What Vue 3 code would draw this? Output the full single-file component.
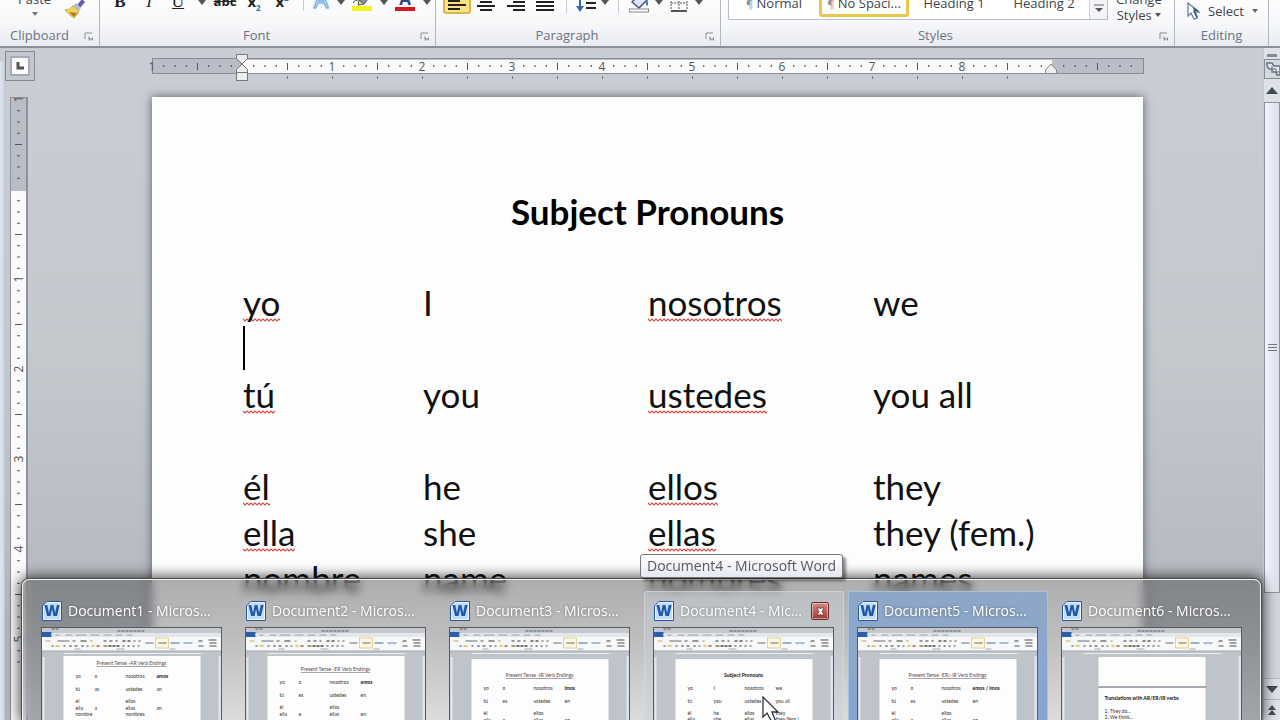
<script setup>
const INCH = 90

// Ruler marks: a number on each inch, a long tick on each half, dots on the eighths.
function marks(from, to) {
  const out = []
  for (let n = from; n <= to; n++) {
    const kind = n % 8 === 0 ? 'num' : n % 4 === 0 ? 'half' : 'dot'
    if (n !== 0) out.push({ n, kind, at: (n * INCH) / 8, label: Math.abs(n / 8) })
  }
  return out
}
const across = marks(-8, 79).filter(m => m.n !== 72)
const down = marks(-8, 42)
const tabStops = Array.from({ length: 17 }, (_, i) => (i + 1) * (INCH / 2))

const rows = [
  ['yo', 'I', 'nosotros', 'we'],
  ['', '', '', ''],
  ['tú', 'you', 'ustedes', 'you all'],
  ['', '', '', ''],
  ['él', 'he', 'ellos', 'they'],
  ['ella', 'she', 'ellas', 'they (fem.)'],
  ['nombre', 'name', 'nombres', 'names']
]

const verbRows = (a, b, c, d) => [
  [0, ['yo', 'o', 'nosotros', a]],
  [13, ['tú', b, 'ustedes', c]],
  [25, ['él', '', 'ellos', '']],
  [32, ['ella', d, 'ellas', c]],
  [38, ['nombre', '', 'nombres', '']]
]

const previews = [
  { name: 'Document1 - Micros...', top: 28, title: 'Present Tense -AR Verb Endings', ty: 37, ry: 50, cols: [34, 53, 84, 115], rows: verbRows('amos', 'as', 'an', 'a') },
  { name: 'Document2 - Micros...', top: 28, title: 'Present Tense -ER Verb Endings', ty: 43, ry: 56, cols: [34, 53, 84, 115], rows: verbRows('emos', 'es', 'en', 'e').slice(0, 4) },
  { name: 'Document3 - Micros...', top: 31, title: 'Present Tense -IR Verb Endings', ty: 49, ry: 62, cols: [34, 53, 84, 115], rows: verbRows('imos', 'es', 'en', 'e').slice(0, 4) },
  { name: 'Document4 - Mic...', top: 31, title: 'Subject Pronouns', plain: true, ty: 49, ry: 62, cols: [34, 60, 91, 122], hover: true,
    rows: [[0, ['yo', 'I', 'nosotros', 'we']], [13, ['tú', 'you', 'ustedes', 'you all']], [25, ['él', 'he', 'ellos', 'they']], [31, ['ella', 'she', 'ellas', 'they (fem.)']]] },
  { name: 'Document5 - Micros...', top: 31, title: 'Present Tense -ER/-IR Verb Endings', ty: 49, ry: 62, cols: [34, 53, 84, 115], active: true, rows: verbRows('emos / imos', 'es', 'en', 'e').slice(0, 4) },
  { name: 'Document6 - Micros...', split: true }
]

const miniIcons = [
  [4, 12, 5, '#d9c58f'], [10, 17, 2, '#777'], [14, 17, 4, '#e0b93a'], [22, 17, 2, '#777'], [28, 17, 2, '#555'], [33, 17, 3, '#777'],
  [40, 17, 2, '#666'], [45, 17, 2, '#888'], [50, 17, 3, '#e2c02c'], [55, 17, 3, '#c0504d'], [62, 17, 4, '#8a7f2e'], [67, 17, 3, '#444'],
  [71, 17, 3, '#444'], [75, 17, 3, '#444'], [81, 17, 2, '#777'], [86, 17, 2, '#666'], [91, 17, 2, '#777'], [96, 17, 2, '#888'],
  [16, 12, 12, '#999'], [31, 12, 3, '#888'], [39, 12, 6, '#777'], [49, 12, 2, '#d2b04d'], [62, 12, 3, '#777'], [68, 12, 3, '#777'],
  [74, 12, 2, '#777'], [81, 12, 3, '#555'], [86, 12, 3, '#555'], [92, 12, 2, '#888'], [97, 12, 2, '#888'],
  [104, 14, 8, '#999'], [117, 14, 8, '#999'], [129, 14, 9, '#7a9cc6'], [142, 14, 9, '#8fa9c9'], [157, 12, 4, '#777'], [157, 17, 5, '#888'],
  [167, 11, 8, '#888'], [168, 14, 7, '#888'], [168, 17, 7, '#888']
]
</script>

<template>
  <div class="window">
    <header class="ribbon">
      <section class="group">
        <div class="tools clip-tools">
          <button class="big">Paste<svg width="8" height="5" viewBox="0 0 8 5"><path d="M1 0h6L4 4z" fill="#777" /></svg></button>
          <button class="tool painter" aria-label="Format Painter">
            <svg width="22" height="22" viewBox="0 0 22 22">
              <path d="M13 8L18 2l3 3-5 6z" fill="#6b5fa8" /><path d="M12 6l5 5-2 3-6-5z" fill="#b9bfd6" />
              <path d="M9 9l6 5q-2 4-5 7Q5 18 1 13q5 0 8-4z" fill="#f2d45c" stroke="#c9aa4a" /><path d="M5 15l5 5 3-4z" fill="#a97c2a" />
            </svg>
          </button>
        </div>
        <footer>Clipboard<button class="launch" aria-label="Clipboard options"><svg width="10" height="10" viewBox="0 0 10 10"><path d="M1 7V1h7" fill="none" stroke="#858b96" /><path d="M4 4l5 5V5L5 9z" fill="#858b96" /></svg></button></footer>
      </section>

      <section class="group">
        <div class="tools font-tools">
          <button class="tool w30 serif"><b>B</b></button>
          <button class="tool w28 serif"><i>I</i></button>
          <button class="tool w30 serif"><u>U</u></button>
          <button class="drop" aria-label="Underline style"><svg width="8" height="5" viewBox="0 0 8 5"><path d="M0 0h8L4 5z" fill="#555" /></svg></button>
          <button class="tool w30 small"><s>abc</s></button>
          <button class="tool w28 script"><span>x<sub>2</sub></span></button>
          <button class="tool w28 script"><span>x<sup>2</sup></span></button>
          <span class="sep"></span>
          <button class="tool w22 glow">A</button>
          <button class="drop" aria-label="Text effects"><svg width="8" height="5" viewBox="0 0 8 5"><path d="M0 0h8L4 5z" fill="#555" /></svg></button>
          <button class="tool w26" aria-label="Highlight">
            <svg width="22" height="22" viewBox="0 0 22 22"><path d="M8 11l9-9 4 3-8 10z" fill="#8b93b4" stroke="#444c6b" /><path d="M8 11l5 4-6 1z" fill="#efe05b" stroke="#555" /><path d="M2 14q2-4 5-3" fill="none" stroke="#444" /><rect x="1" y="17" width="20" height="5" fill="#f5f31c" /></svg>
          </button>
          <button class="drop" aria-label="Highlight colour"><svg width="8" height="5" viewBox="0 0 8 5"><path d="M0 0h8L4 5z" fill="#555" /></svg></button>
          <button class="tool w26 ink">A</button>
          <button class="drop" aria-label="Font colour"><svg width="8" height="5" viewBox="0 0 8 5"><path d="M0 0h8L4 5z" fill="#555" /></svg></button>
        </div>
        <footer>Font<button class="launch" aria-label="Font options"><svg width="10" height="10" viewBox="0 0 10 10"><path d="M1 7V1h7" fill="none" stroke="#858b96" /><path d="M4 4l5 5V5L5 9z" fill="#858b96" /></svg></button></footer>
      </section>

      <section class="group">
        <div class="tools para-tools">
          <button class="tool w28 on" aria-label="Align left"><svg width="20" height="20" viewBox="0 0 20 20"><path d="M1 5h18M1 9h12M1 13h18M1 17h12" stroke="#222" stroke-width="2" /></svg></button>
          <button class="tool w30" aria-label="Center"><svg width="20" height="20" viewBox="0 0 20 20"><path d="M1 5h18M4 9h12M1 13h18M4 17h12" stroke="#222" stroke-width="2" /></svg></button>
          <button class="tool w30" aria-label="Align right"><svg width="20" height="20" viewBox="0 0 20 20"><path d="M1 5h18M7 9h12M1 13h18M7 17h12" stroke="#222" stroke-width="2" /></svg></button>
          <button class="tool w28" aria-label="Justify"><svg width="20" height="20" viewBox="0 0 20 20"><path d="M1 5h18M1 9h18M1 13h18M1 17h18" stroke="#222" stroke-width="2" /></svg></button>
          <span class="sep"></span>
          <button class="tool w26" aria-label="Line spacing"><svg width="20" height="22" viewBox="0 0 20 22"><path d="M4 4v14" stroke="#2f68b5" stroke-width="2" /><path d="M0 15h8L4 21z" fill="#2f68b5" /><path d="M10 7h10M10 12h10M10 17h10" stroke="#222" stroke-width="2" /></svg></button>
          <button class="drop narrow" aria-label="Spacing options"><svg width="8" height="5" viewBox="0 0 8 5"><path d="M0 0h8L4 5z" fill="#555" /></svg></button>
          <span class="sep"></span>
          <button class="tool w28" aria-label="Shading"><svg width="22" height="22" viewBox="0 0 22 22"><path d="M4 11l8-8 7 6-8 8z" fill="#dfe7f4" stroke="#44598a" stroke-width="1.5" /><path d="M14 5q6 0 6 10-3-1-2-6z" fill="#2f68b5" /><rect x="1.500" y="18" width="19" height="3" fill="#fff" stroke="#888" /></svg></button>
          <button class="drop narrow" aria-label="Shading colour"><svg width="8" height="5" viewBox="0 0 8 5"><path d="M0 0h8L4 5z" fill="#555" /></svg></button>
          <button class="tool w28" aria-label="Borders"><svg width="18" height="20" viewBox="0 0 18 20"><path d="M1 2v15M17 2v15M9 2v15M1 10h16" fill="none" stroke="#555" stroke-dasharray="2 1" /><path d="M1 18h16" stroke="#555" stroke-width="2" /></svg></button>
          <button class="drop narrow" aria-label="Border options"><svg width="8" height="5" viewBox="0 0 8 5"><path d="M0 0h8L4 5z" fill="#555" /></svg></button>
        </div>
        <footer>Paragraph<button class="launch" aria-label="Paragraph options"><svg width="10" height="10" viewBox="0 0 10 10"><path d="M1 7V1h7" fill="none" stroke="#858b96" /><path d="M4 4l5 5V5L5 9z" fill="#858b96" /></svg></button></footer>
      </section>

      <section class="group">
        <div class="tools style-tools">
          <div class="gallery">
            <button><span class="pil">¶</span> Normal</button>
            <button class="picked"><span class="pil">¶</span> No Spaci...</button>
            <button>Heading 1</button>
            <button>Heading 2</button>
            <button class="more" aria-label="More styles"><svg width="10" height="9" viewBox="0 0 10 9"><path d="M0 1h10" stroke="#666" /><path d="M1 4h8L5 8z" fill="#555" /></svg></button>
          </div>
          <button class="change">Change<br>Styles <svg width="6" height="4" viewBox="0 0 6 4"><path d="M0 0h6L3 4z" fill="#555" /></svg></button>
        </div>
        <footer class="styles-label">Styles<button class="launch" aria-label="Styles options"><svg width="10" height="10" viewBox="0 0 10 10"><path d="M1 7V1h7" fill="none" stroke="#858b96" /><path d="M4 4l5 5V5L5 9z" fill="#858b96" /></svg></button></footer>
      </section>

      <section class="group">
        <div class="tools edit-tools">
          <button class="select">
            <svg width="13" height="18" viewBox="0 0 13 18"><path d="M1 1v13l3-3 3 6 3-1-3-6h5z" fill="#fff" stroke="#5f7fae" stroke-width="1.300" /><path d="M7 10l3 6 1-1-3-6h4L6 5z" fill="#44546e" /></svg>
            Select
            <svg width="6" height="4" viewBox="0 0 6 4"><path d="M0 0h6L3 4z" fill="#666" /></svg>
          </button>
        </div>
        <footer>Editing</footer>
      </section>
      <div class="rest"></div>
    </header>

    <main class="work">
      <div class="edge"></div>

      <aside class="side">
        <button class="tabsel" aria-label="Left tab"><span><svg width="8" height="8" viewBox="0 0 8 8"><path d="M2 0v6h6" fill="none" stroke="#555" stroke-width="3" /></svg></span></button>
        <svg class="vruler" width="18" height="100%">
          <rect x="0" y="0" width="18" height="100%" fill="#8d929b" />
          <rect x="1" y="1" width="15" height="93" fill="#b9bdc7" />
          <rect x="1" y="94" width="15" height="100%" fill="#fafafa" />
          <g transform="translate(8 92)">
            <template v-for="m in down" :key="m.n">
              <rect v-if="m.kind === 'dot'" x="-1" :y="m.at" width="3" height="1" fill="#555" />
              <rect v-else-if="m.kind === 'half'" x="-3" :y="m.at" width="7" height="1" fill="#555" />
              <text v-else :transform="`translate(5 ${m.at}) rotate(-90)`" text-anchor="middle">{{ m.label }}</text>
            </template>
          </g>
        </svg>
      </aside>

      <div class="canvas">
        <svg class="hruler" width="100%" height="28">
          <rect x="0" y="6" width="100%" height="16" fill="#858a93" />
          <rect x="1" y="7" class="span" height="14" fill="#b9bdc7" />
          <rect class="live" x="90" y="8" height="13" fill="#fafafa" />
          <g transform="translate(90 14)">
            <template v-for="m in across" :key="m.n">
              <rect v-if="m.kind === 'dot'" :x="m.at" y="-1" width="1" height="2" fill="#444" />
              <rect v-else-if="m.kind === 'half'" :x="m.at" y="-3" width="1" height="7" fill="#555" />
              <text v-else :x="m.at" y="5" text-anchor="middle">{{ m.label }}</text>
            </template>
            <rect v-for="t in tabStops" :key="t" :x="t" y="10" width="1" height="3" fill="#777" />
          </g>
          <path d="M84.500 2.500h11v4l-5.500 5.500-5.500-5.500z" fill="#eceef0" stroke="#777" />
          <path d="M90 12l5.500 5.500v4h-11v-4z" fill="#eceef0" stroke="#777" />
          <rect x="84.500" y="20.500" width="11" height="8" fill="#eceef0" stroke="#777" />
          <svg x="100%" y="0" width="1" height="24" overflow="visible"><path d="M-93 12l5.500 6v3.500h-11V18z" fill="#eceef0" stroke="#8a8a8a" /></svg>
        </svg>
        <article class="page">
          <h1>Subject Pronouns</h1>
          <table>
            <tbody>
              <tr v-for="(r, i) in rows" :key="i">
                <td v-for="(c, j) in r" :key="j">
                  <span v-if="i === 1 && j === 0" class="caret"></span>
                  <span v-else :class="{ typo: c && j % 2 === 0 && i < 6 }">{{ c }}</span>
                </td>
              </tr>
            </tbody>
          </table>
        </article>
      </div>

      <aside class="scroll">
        <span class="split"></span>
        <button class="toggle" aria-label="View ruler"><svg width="17" height="18" viewBox="0 0 17 18"><path d="M2 3h5l2 3h6v9h-3l-1-3H7v-3H4L2 6z" fill="#dfe3ea" stroke="#6b7280" stroke-width="1.500" /><path d="M7 6v3h4v3h3" fill="none" stroke="#6b7280" /></svg></button>
        <button class="arrow" aria-label="Scroll up"><svg width="12" height="7" viewBox="0 0 12 7"><path d="M0 7l6-7 6 7z" fill="#444b57" /></svg></button>
        <div class="track"><div class="thumb"><i></i><i></i><i></i></div></div>
        <button class="arrow low" aria-label="Scroll down"><svg width="12" height="7" viewBox="0 0 12 7"><path d="M0 0l6 7 6-7z" fill="#444b57" /></svg></button>
        <button class="arrow low prev" aria-label="Previous page"><svg width="8" height="11" viewBox="0 0 8 11"><path d="M0 5l4-5 4 5zM0 10l4-5 4 5z" fill="#444b57" /></svg></button>
      </aside>
    </main>

    <nav class="peek">
      <section v-for="(p, k) in previews" :key="k" class="card" :class="{ hover: p.hover, active: p.active }">
        <header>
          <svg class="word" width="20" height="20" viewBox="0 0 20 20">
            <path d="M5 .5h14.500v19H.5V5z" fill="#eef5fd" stroke="#2458a6" />
            <path d="M6 2h12v16H2V6z" fill="#c3dcf5" />
            <text x="10" y="15" text-anchor="middle">W</text>
          </svg>
          <h2>{{ p.name }}</h2>
          <button v-if="p.hover" class="close" aria-label="Close"><svg width="9" height="9" viewBox="0 0 9 9"><path d="M1 1h3l.5 1L5 1h3L6 4.500 8 8H5l-.5-1L4 8H1l2-3.500z" fill="#fff" stroke="#4a1512" stroke-width=".6" /></svg></button>
        </header>
        <svg class="mini" viewBox="0 0 180 92" preserveAspectRatio="xMidYMin slice">
          <rect width="180" height="92" fill="#bfc4ca" />
          <rect width="180" height="9" fill="#c5c9ce" />
          <rect x="0" y="4" width="10" height="5" fill="#2b5cae" />
          <path d="M10 1h8M76 3h28" stroke="#8b9098" stroke-width="2" stroke-dasharray="3 1" />
          <rect x="10" y="5" width="170" height="4" fill="#e4e7ea" />
          <path d="M14 7h4M24 7h7M34 7h11M49 7h9M62 7h8M74 7h7M85 7h6" stroke="#9a9fa6" stroke-width="1" />
          <rect y="9" width="180" height="14" fill="#f7f8fa" />
          <rect x="114" y="10" width="13" height="10" fill="#fbf6de" stroke="#d8c477" stroke-width=".7" />
          <rect v-for="(m, n) in miniIcons" :key="n" :x="m[0]" :y="m[1]" :width="m[2]" height="2" :fill="m[3]" opacity=".75" />
          <path d="M33 21h6M75 21h8M128 21h6" stroke="#aaa" />
          <path d="M0 23h180" stroke="#a4a9b0" />
          <rect x="22" y="25" width="138" height="1" fill="#e8eaec" />
          <rect x="1" y="29" width="2" height="63" fill="#e6e8eb" />
          <rect x="177" y="28" width="3" height="64" fill="#dfe3ec" />
          <template v-if="p.split">
            <rect x="37" y="29" width="107" height="29" fill="#fdfdfd" />
            <rect x="37" y="60" width="107" height="32" fill="#fdfdfd" />
            <path d="M37 59h108" stroke="#8d9299" />
            <text x="43" y="72" class="m bold">Translations with AR/ER/IR verbs</text>
            <text x="43" y="85" class="m">1. They do...</text>
            <text x="43" y="91" class="m">2. We think...</text>
          </template>
          <template v-else>
            <rect x="22" :y="p.top" width="137" height="70" fill="#fdfdfd" />
            <text x="90" :y="p.ty" text-anchor="middle" class="m" :class="p.plain ? 'bold' : 'under'">{{ p.title }}</text>
            <template v-for="(r, n) in p.rows" :key="n">
              <template v-for="(w, q) in r[1]" :key="q">
                <text v-if="w && p.ry + r[0] < 95" class="m" :class="{ bold: q === 3 && n === 0 && !p.plain }" :x="p.cols[q]" :y="p.ry + r[0]">{{ w }}</text>
              </template>
            </template>
          </template>
        </svg>
      </section>
    </nav>

    <div class="tip" role="tooltip">Document4 - Microsoft Word</div>
    <svg class="pointer" width="18" height="26" viewBox="0 0 18 26"><path d="M1 1v20l4-4 5 9h4l-4-10h6z" fill="#fff" stroke="#333" stroke-width="1.300" /></svg>
  </div>
</template>

<style>
body { margin: 0; overflow: hidden; }
</style>

<style scoped>
* { box-sizing: border-box; }
button { margin: 0; padding: 0; border: 0; background: none; font: inherit; color: inherit; }
svg { display: block; }
.window { position: relative; display: flex; flex-direction: column; height: 100vh; overflow: hidden; font-family: "Open Sans", "Noto Sans", sans-serif; font-size: 13px; color: #3f444c; background: #c4c8ce; }

/* The ribbon is scrolled up: groups hang from their bottom edge and the top is clipped. */
.ribbon { flex: none; display: grid; grid-template-columns: 100px 336px 285px 454px 94px 1fr; grid-template-rows: minmax(0, 1fr); height: 48px; background: linear-gradient(#fdfdfe, #f7f8fa 45%, #e9ecf1); border-bottom: 2px solid #8c9096; overflow: hidden; }
.group { display: flex; flex-direction: column; justify-content: flex-end; min-width: 0; min-height: 0; border-right: 1px solid #b3b7bf; }
.group > footer { position: relative; flex: none; height: 20px; line-height: 18px; text-align: center; color: #6d7380; padding-right: 22px; }
.group:first-child > footer { padding-right: 20px; }
.group:nth-child(5) > footer { padding-right: 0; }
.group > .styles-label { padding-right: 24px; }
.launch { position: absolute; right: 5px; top: 6px; }
.tools { display: flex; align-items: flex-end; flex: none; }
.tool { display: flex; align-items: flex-end; justify-content: center; height: 22px; line-height: 20px; color: #222; }
.w22 { width: 22px; } .w26 { width: 26px; } .w28 { width: 28px; } .w30 { width: 30px; }
.drop { display: flex; align-items: center; justify-content: center; width: 17px; height: 14px; }
.narrow { width: 12px; }
.sep { width: 14px; height: 14px; background: linear-gradient(90deg, transparent 7px, #c6c9cf 7px, #c6c9cf 8px, transparent 8px); }
.clip-tools { gap: 12px; padding: 0 0 7px 18px; }
.big { display: flex; flex-direction: column; align-items: center; gap: 4px; line-height: 18px; padding-bottom: 2px; }
.painter { width: 24px; }
.font-tools { padding: 0 0 15px 5px; }
.font-tools .drop { margin-bottom: 2px; }
.para-tools .drop { margin-bottom: 4px; }
.serif { font-family: "Liberation Serif", serif; font-size: 17px; line-height: 18px; }
.small { font-size: 13px; font-weight: 700; }
.script { font-size: 15px; font-weight: 700; }
.script sub, .script sup { font-size: 8px; color: #2f68b5; line-height: 0; }
.glow { font-size: 23px; line-height: 24px; color: #e6f3fd; -webkit-text-stroke: 1px #6ba6d8; text-shadow: 0 0 3px #8cc3ec; }
.ink { font-size: 17px; font-weight: 700; color: #31497c; background: linear-gradient(#d9151d, #d9151d) 3px 18px / 20px 4px no-repeat; line-height: 16px; padding-bottom: 4px; }
.para-tools { padding: 0 0 13px 7px; }
.on { background: linear-gradient(#fbdc74, #ffe58a); border: 2px solid #dcb64a; border-radius: 3px; height: 24px; margin-bottom: -1px; }
.style-tools { padding: 0 0 6px 7px; gap: 8px; }
.gallery { display: flex; align-items: flex-end; height: 48px; border: 1px solid #b9bdc6; background: #fff; line-height: 20px; }
.gallery button { width: 90px; height: 46px; padding: 20px 0 6px; white-space: nowrap; }
.gallery .picked { border: 3px solid #e8c84b; border-radius: 3px; padding: 17px 0 1px; height: 44px; margin-bottom: 2px; }
.gallery .more { display: flex; align-items: center; justify-content: center; width: 18px; border-left: 1px solid #ccd0d6; background: #f3f4f7; padding: 24px 0 0; }
.pil { font-size: 11px; color: #8d929c; }
.change { line-height: 16px; white-space: nowrap; margin-bottom: -3px; }
.change svg { display: inline-block; vertical-align: 3px; }
.edit-tools { padding: 0 0 5px 12px; }
.select { display: flex; align-items: center; gap: 8px; height: 20px; }

.work { flex: 1; min-height: 0; display: grid; grid-template-columns: 5px 23px 1fr 17px; background: linear-gradient(#cacdd3, #c4c9ce 45%, #b4b8be 85%); }
.edge { margin-top: 14px; background: #d3dbe7; border-right: 1px solid #c0c7d2; border-left: 2px solid #dbe2ec; }
.side { display: flex; flex-direction: column; min-height: 0; }
.tabsel { flex: none; width: 30px; height: 30px; margin: 3px 0 16px; padding: 4px; border: 1px solid #858a93; background: #c3c7ce; }
.tabsel span { display: flex; align-items: center; justify-content: center; width: 20px; height: 20px; background: #fbfbfc; border: 2px solid #a4aab6; }
.vruler { flex: 1; min-height: 0; margin-left: 5px; }
.vruler text, .hruler text { font-size: 12px; fill: #555; }

.canvas { display: flex; flex-direction: column; min-width: 0; padding: 4px 119px 0 124px; }
.hruler { flex: none; overflow: visible; }
.live { width: calc(100% - 182px); }
.span { width: calc(100% - 2px); }
.page { flex: 1; margin: 17px 1px 0 0; padding: 91px 0 0 91px; background: #fdfdfd; box-shadow: 0 0 9px rgba(50, 55, 65, .75); color: #111; font-family: Lato, "Open Sans", sans-serif; overflow: hidden; }
h1 { margin: 0 91px 45px 0; font-size: 35px; line-height: 46px; font-weight: 700; text-align: center; color: #000; }
table { width: 100%; border-collapse: collapse; table-layout: fixed; font-size: 35px; }
td { height: 46px; padding: 0; line-height: 46px; white-space: nowrap; }
td:nth-child(1) { width: 180px; }
td:nth-child(2), td:nth-child(3) { width: 225px; }
.caret { display: block; width: 2px; height: 44px; background: #000; }
.typo { display: inline-block; height: 46px; background: url("data:image/svg+xml,%3Csvg xmlns='http://www.w3.org/2000/svg' width='4' height='4'%3E%3Cpath d='M-1 0L2 3L5 0' fill='none' stroke='%23d5463f' stroke-width='1.2'/%3E%3C/svg%3E") 0 39px repeat-x; }

.scroll { display: flex; flex-direction: column; align-items: center; min-height: 0; background: #dde1e8; border-left: 1px solid #c3c7cf; }
.split { flex: none; width: 10px; height: 3px; margin: 6px 0 2px; background: #858b96; }
.toggle { flex: none; width: 17px; height: 20px; border: 1px solid #858a93; background: #d4d8df; overflow: hidden; }
.arrow { flex: none; display: flex; align-items: center; justify-content: center; width: 17px; height: 23px; }
.track { flex: 1; width: 100%; padding-bottom: 85px; background: #d0d4db; }
.thumb { display: flex; flex-direction: column; align-items: center; justify-content: center; gap: 2px; height: 100%; border: 1px solid #8e949f; background: linear-gradient(90deg, #f3f5fc, #dce0ec); }
.thumb i { width: 9px; height: 1px; background: #6e7480; }
.low { height: 21px; border-top: 1px solid #b3b7bf; }

.peek { position: absolute; left: 22px; right: 19px; bottom: 0; display: grid; grid-template-columns: repeat(6, minmax(0, 1fr)); gap: 4px; height: 141px; padding: 11px 8px 0 9px; border: 1px solid #f2f2f2; border-bottom: 0; border-radius: 7px 7px 0 0; background: linear-gradient(rgba(50, 50, 50, .39), rgba(60, 60, 60, .33) 40%, rgba(90, 90, 90, .2)); backdrop-filter: blur(5px); box-shadow: 0 0 0 1px #4c4c4c, 0 0 14px 2px rgba(0, 0, 0, .75); }
.card { display: flex; flex-direction: column; min-width: 0; padding: 0 9px 0 8px; border: 1px solid transparent; border-bottom: 0; border-radius: 3px 3px 0 0; }
.hover { background: rgba(200, 208, 218, .45); border-color: rgba(215, 220, 226, .6); }
.active { background: linear-gradient(#8ea7c8, #86a6cf); border-color: #a9c1df; }
.card header { flex: none; display: flex; align-items: center; height: 35px; padding: 3px 5px 0 1px; gap: 6px; }
.word { flex: none; }
.word text { font-size: 15px; font-weight: 800; fill: #1d56ab; }
h2 { flex: 1; min-width: 0; margin: 0; white-space: nowrap; font-size: 14px; line-height: 22px; font-weight: 400; color: #fff; text-shadow: 0 0 3px rgba(40, 40, 40, .5); }
.close { flex: none; display: flex; align-items: center; justify-content: center; width: 18px; height: 18px; border: 1px solid #6d2a28; border-radius: 2px; background: linear-gradient(#d08a84, #a43a36); box-shadow: inset 0 0 0 1px rgba(255, 255, 255, .45); }
.mini { flex: 1; width: 100%; min-height: 0; border: 1px solid #555a60; border-bottom: 0; }
.m { font-family: Lato, sans-serif; font-size: 5px; fill: #333; }
.bold { font-weight: 700; fill: #111; }
.under { text-decoration: underline; fill: #5b4a4c; }

.tip { position: absolute; left: 50%; bottom: 142px; padding: 0 6px; border: 1px solid #767676; border-radius: 3px; background: linear-gradient(#fff, #e6e8f2); line-height: 22px; font-size: 14px; color: #575757; box-shadow: 3px 3px 3px rgba(0, 0, 0, .45); }
.pointer { position: absolute; left: 762px; bottom: -2px; }
</style>
